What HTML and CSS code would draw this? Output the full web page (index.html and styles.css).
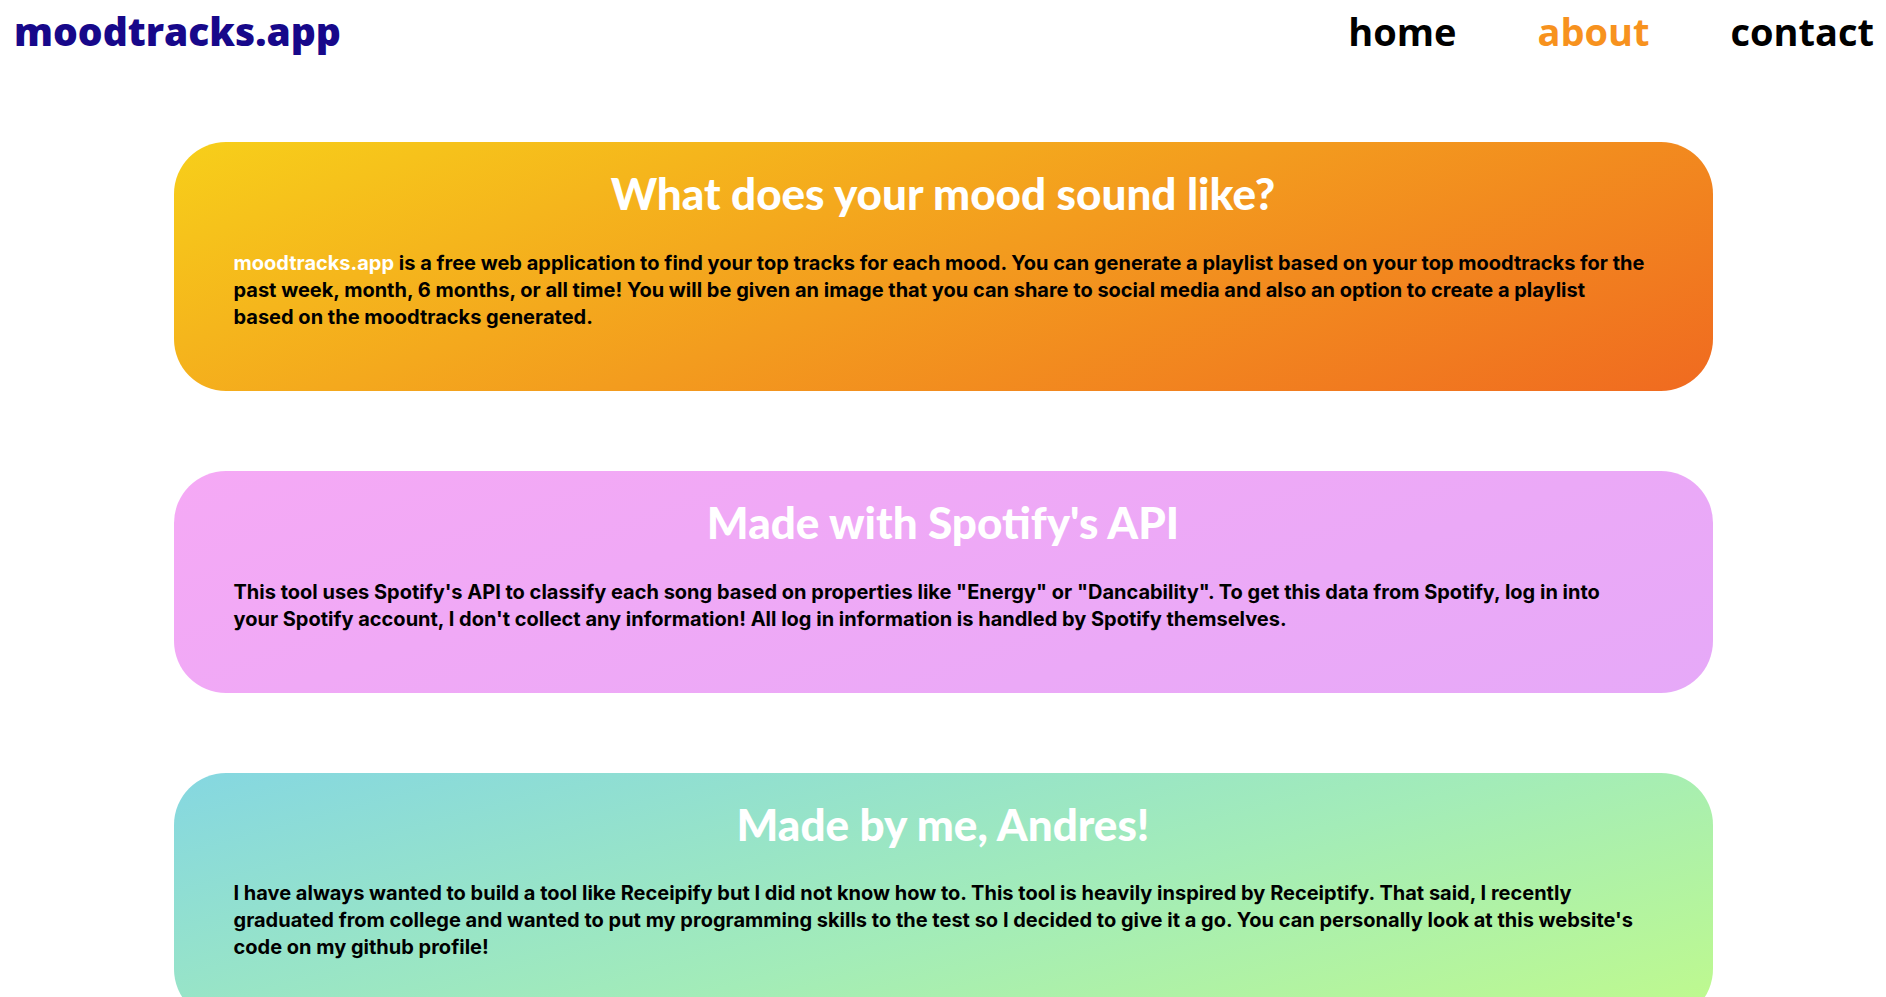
FILE: index.html
```html
<!DOCTYPE html>
<html lang="en">
<head>
<meta charset="utf-8">
<title>moodtracks.app - about</title>
<link rel="stylesheet" href="styles.css">
</head>
<body>
<header class="topbar">
  <a class="logo" href="#">moodtracks.app</a>
  <nav class="nav">
    <a class="nav-link" href="#">home</a>
    <a class="nav-link active" href="#">about</a>
    <a class="nav-link" href="#">contact</a>
  </nav>
</header>
<main class="content">
  <section class="card card-orange">
    <h2 class="card-title">What does your mood sound like?</h2>
    <p class="card-text"><span class="hl">moodtracks.app</span> is a free web application to find your top tracks for each mood. You can generate a playlist based on your top moodtracks for the past week, month, 6 months, or all time! You will be given an image that you can share to social media and also an option to create a playlist based on the moodtracks generated.</p>
  </section>
  <section class="card card-pink">
    <h2 class="card-title">Made with Spotify's API</h2>
    <p class="card-text">This tool uses Spotify's API to classify each song based on properties like "Energy" or "Dancability". To get this data from Spotify, log in into your Spotify account, I don't collect any information! All log in information is handled by Spotify themselves.</p>
  </section>
  <section class="card card-green">
    <h2 class="card-title">Made by me, Andres!</h2>
    <p class="card-text">I have always wanted to build a tool like Receipify but I did not know how to. This tool is heavily inspired by Receiptify. That said, I recently graduated from college and wanted to put my programming skills to the test so I decided to give it a go. You can personally look at this website's code on my github profile!</p>
  </section>
</main>
</body>
</html>
```
FILE: styles.css
```css
* { box-sizing: border-box; }

html, body {
  margin: 0;
  padding: 0;
  background: #ffffff;
  font-family: "Inter", "Open Sans", sans-serif;
}

.topbar {
  display: flex;
  justify-content: space-between;
  align-items: flex-start;
  padding: 0 12px 0 14px;
  height: 142px;
}

.logo {
  padding-top: 8px;
  font-family: "Open Sans", sans-serif;
  font-size: 39px;
  font-weight: 800;
  color: #17088a;
  text-decoration: none;
  line-height: 1.2;
}

.nav {
  display: flex;
  gap: 81px;
  padding-top: 9px;
}

.nav-link {
  font-family: "Open Sans", sans-serif;
  font-size: 38px;
  font-weight: 700;
  color: #000000;
  text-decoration: none;
  line-height: 1.2;
}

.nav-link.active {
  color: #f7921e;
}

.content {
  display: flex;
  flex-direction: column;
  align-items: center;
  gap: 80px;
  padding-bottom: 40px;
}

.card {
  width: 1539px;
  border-radius: 52px;
  padding: 25px 66px 60px 60px;
}

.card-orange {
  background: linear-gradient(160deg, #f7cf1a 0%, #f39c1e 50%, #f06a20 100%);
}

.card-pink {
  background: linear-gradient(160deg, #f5a9f5 0%, #e6a9f8 100%);
}

.card-green {
  background: linear-gradient(165deg, #85d7e1 0%, #a3ecb8 55%, #c0fa8c 100%);
}

.card-title {
  margin: 0 0 30px;
  padding-left: 6px;
  font-family: "Lato", sans-serif;
  font-size: 44px;
  font-weight: 900;
  color: #ffffff;
  text-align: center;
  line-height: 1.2;
}

.card-text {
  margin: 0;
  font-family: "Inter", sans-serif;
  font-size: 20px;
  font-weight: 700;
  color: #000000;
  line-height: 27px;
}

.hl {
  color: #ffffff;
}
```
